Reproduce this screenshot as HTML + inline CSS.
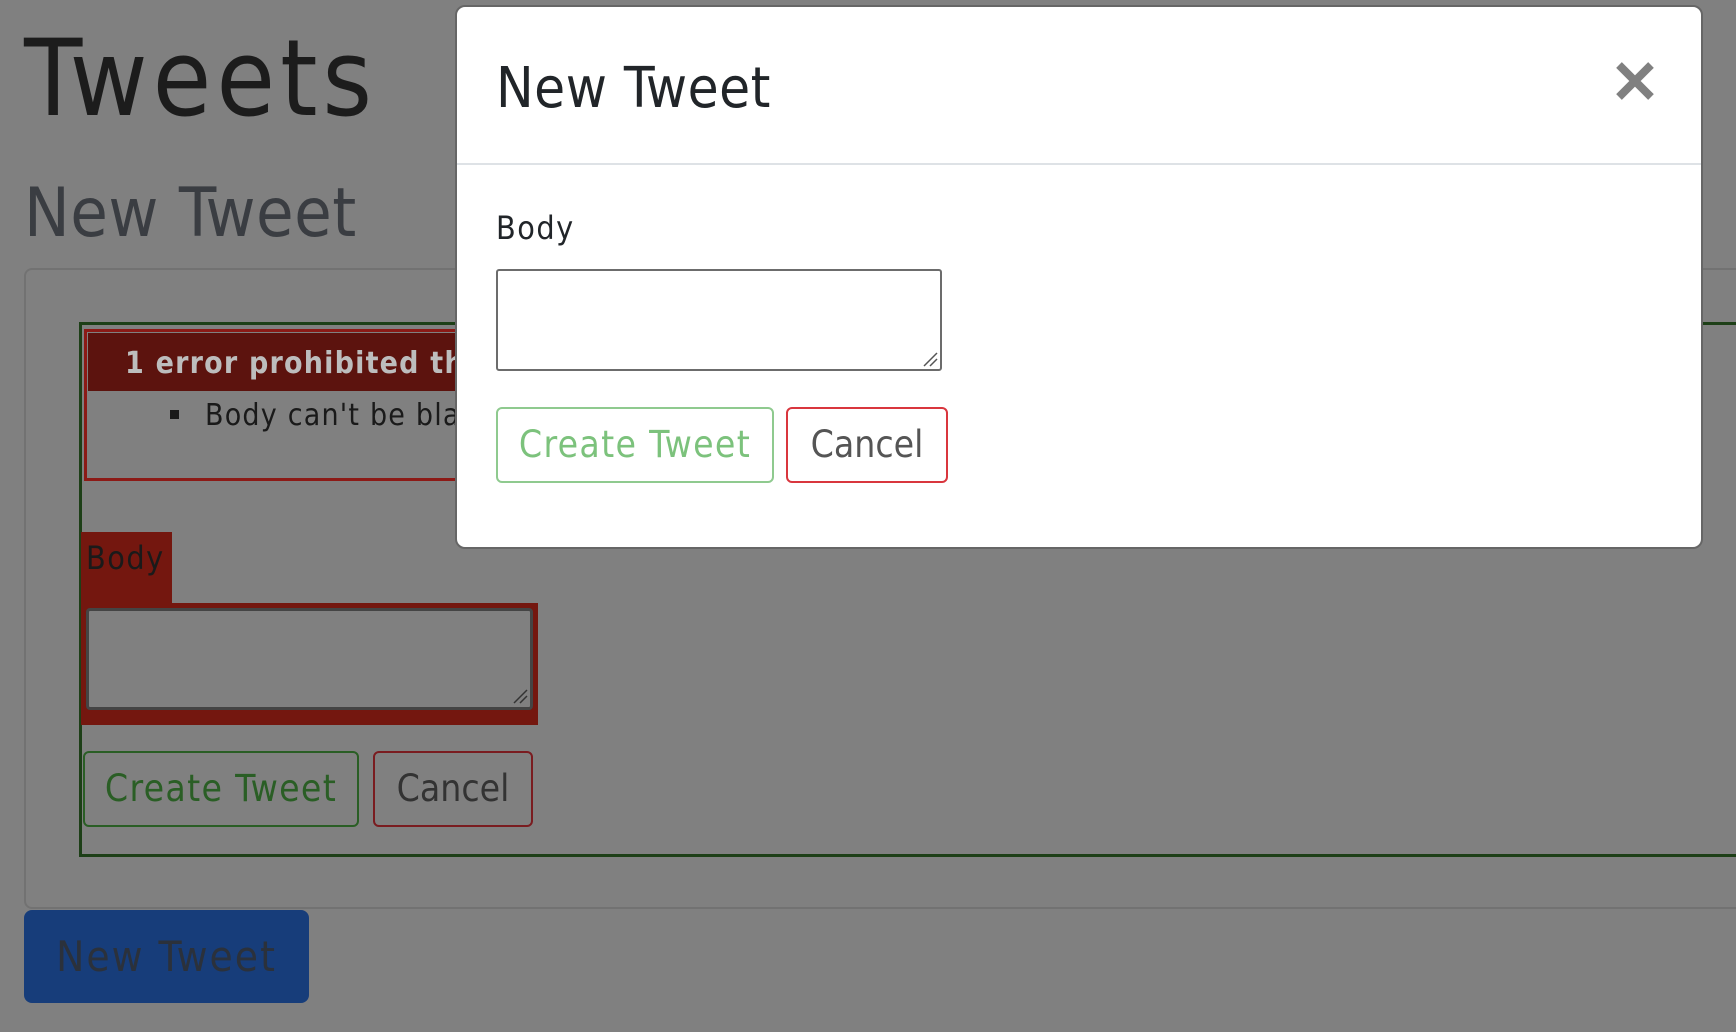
<!DOCTYPE html>
<html><head><meta charset="utf-8"><style>
*{margin:0;padding:0;box-sizing:border-box}
body{width:1736px;height:1032px;background:#808080;position:relative;overflow:hidden;font-family:"DejaVu Sans Condensed","DejaVu Sans","Liberation Sans",sans-serif}
.a{position:absolute;white-space:nowrap}
</style></head><body>
<div class="a" style="left:24px;top:14px;font-size:106px;line-height:130px;color:#1c1c1c;letter-spacing:5px">Tweets</div>
<div class="a" style="left:24px;top:172px;font-size:68px;line-height:84px;color:#3a3d42;letter-spacing:0.5px">New Tweet</div>
<div class="a" style="left:24px;top:268px;width:1760px;height:641px;border:2px solid #727272;border-radius:8px"></div>
<div class="a" style="left:79px;top:322px;width:1700px;height:535px;border:3px solid #1d3f17"></div>
<div class="a" style="left:84px;top:329px;width:1400px;height:152px;border:3px solid #8c1a16;background:#808080"></div>
<div class="a" style="left:88px;top:333px;width:1392px;height:58px;background:#5c130e"></div>
<div class="a" style="left:125px;top:344px;font-size:30px;font-weight:bold;line-height:40px;color:#bdbdbd;letter-spacing:1.2px">1 error prohibited this tweet from being saved:</div>
<div class="a" style="left:170px;top:410px;width:9px;height:9px;background:#1a1a1a"></div>
<div class="a" style="left:205px;top:396px;font-size:30px;line-height:40px;color:#1a1a1a;letter-spacing:1.2px">Body can't be blank</div>
<div class="a" style="left:81px;top:532px;width:91px;height:72px;background:#74170f"></div>
<div class="a" style="left:86px;top:536px;font-size:32px;line-height:44px;color:#1a1a1a;letter-spacing:1.5px">Body</div>
<div class="a" style="left:81px;top:603px;width:457px;height:122px;background:#74170f"></div>
<div class="a" style="left:86px;top:608px;width:447px;height:102px;border:3px solid #444;border-radius:4px;background:#808080"></div>
<svg class="a" style="left:512px;top:688px" width="16" height="16"><path d="M2 15L15 2M8 15L15 8" stroke="#333" stroke-width="1.5"/></svg>
<div class="a" style="left:83px;top:751px;width:276px;height:76px;border:2px solid #2a5e25;border-radius:6px;color:#2a5e25;font-size:37px;line-height:72px;text-align:center;letter-spacing:1.3px">Create Tweet</div>
<div class="a" style="left:373px;top:751px;width:160px;height:76px;border:2px solid #7a1c20;border-radius:6px;color:#333;font-size:37px;line-height:72px;text-align:center">Cancel</div>
<div class="a" style="left:24px;top:910px;width:285px;height:93px;background:#173d7a;border-radius:8px;color:#2b313b;font-size:42px;line-height:93px;text-align:center;letter-spacing:2px">New Tweet</div>

<div class="a" style="left:455px;top:5px;width:1248px;height:544px;background:#fff;border:2px solid #666;border-radius:10px">
  <div class="a" style="left:39px;top:44px;font-size:56px;line-height:76px;color:#212529;letter-spacing:0.5px">New Tweet</div>
  <svg class="a" style="left:1159px;top:55px" width="38" height="38" viewBox="0 0 38 38"><path d="M3 3L35 35M35 3L3 35" stroke="#808080" stroke-width="8"/></svg>
  <div class="a" style="left:0;top:156px;width:1244px;height:2px;background:#dee2e6"></div>
  <div class="a" style="left:39px;top:199px;font-size:32px;line-height:44px;color:#212529;letter-spacing:1.5px">Body</div>
  <div class="a" style="left:39px;top:262px;width:446px;height:102px;border:2px solid #6c6c6c;border-radius:3px"></div>
  <svg class="a" style="left:465px;top:344px" width="16" height="16"><path d="M2 15L15 2M8 15L15 8" stroke="#555" stroke-width="1.5"/></svg>
  <div class="a" style="left:39px;top:400px;width:278px;height:76px;border:2px solid #8fca8f;border-radius:6px;color:#7cc27c;font-size:37px;line-height:72px;text-align:center;letter-spacing:1.3px">Create Tweet</div>
  <div class="a" style="left:329px;top:400px;width:162px;height:76px;border:2px solid #d9363e;border-radius:6px;color:#555;font-size:37px;line-height:72px;text-align:center">Cancel</div>
</div>
</body></html>
